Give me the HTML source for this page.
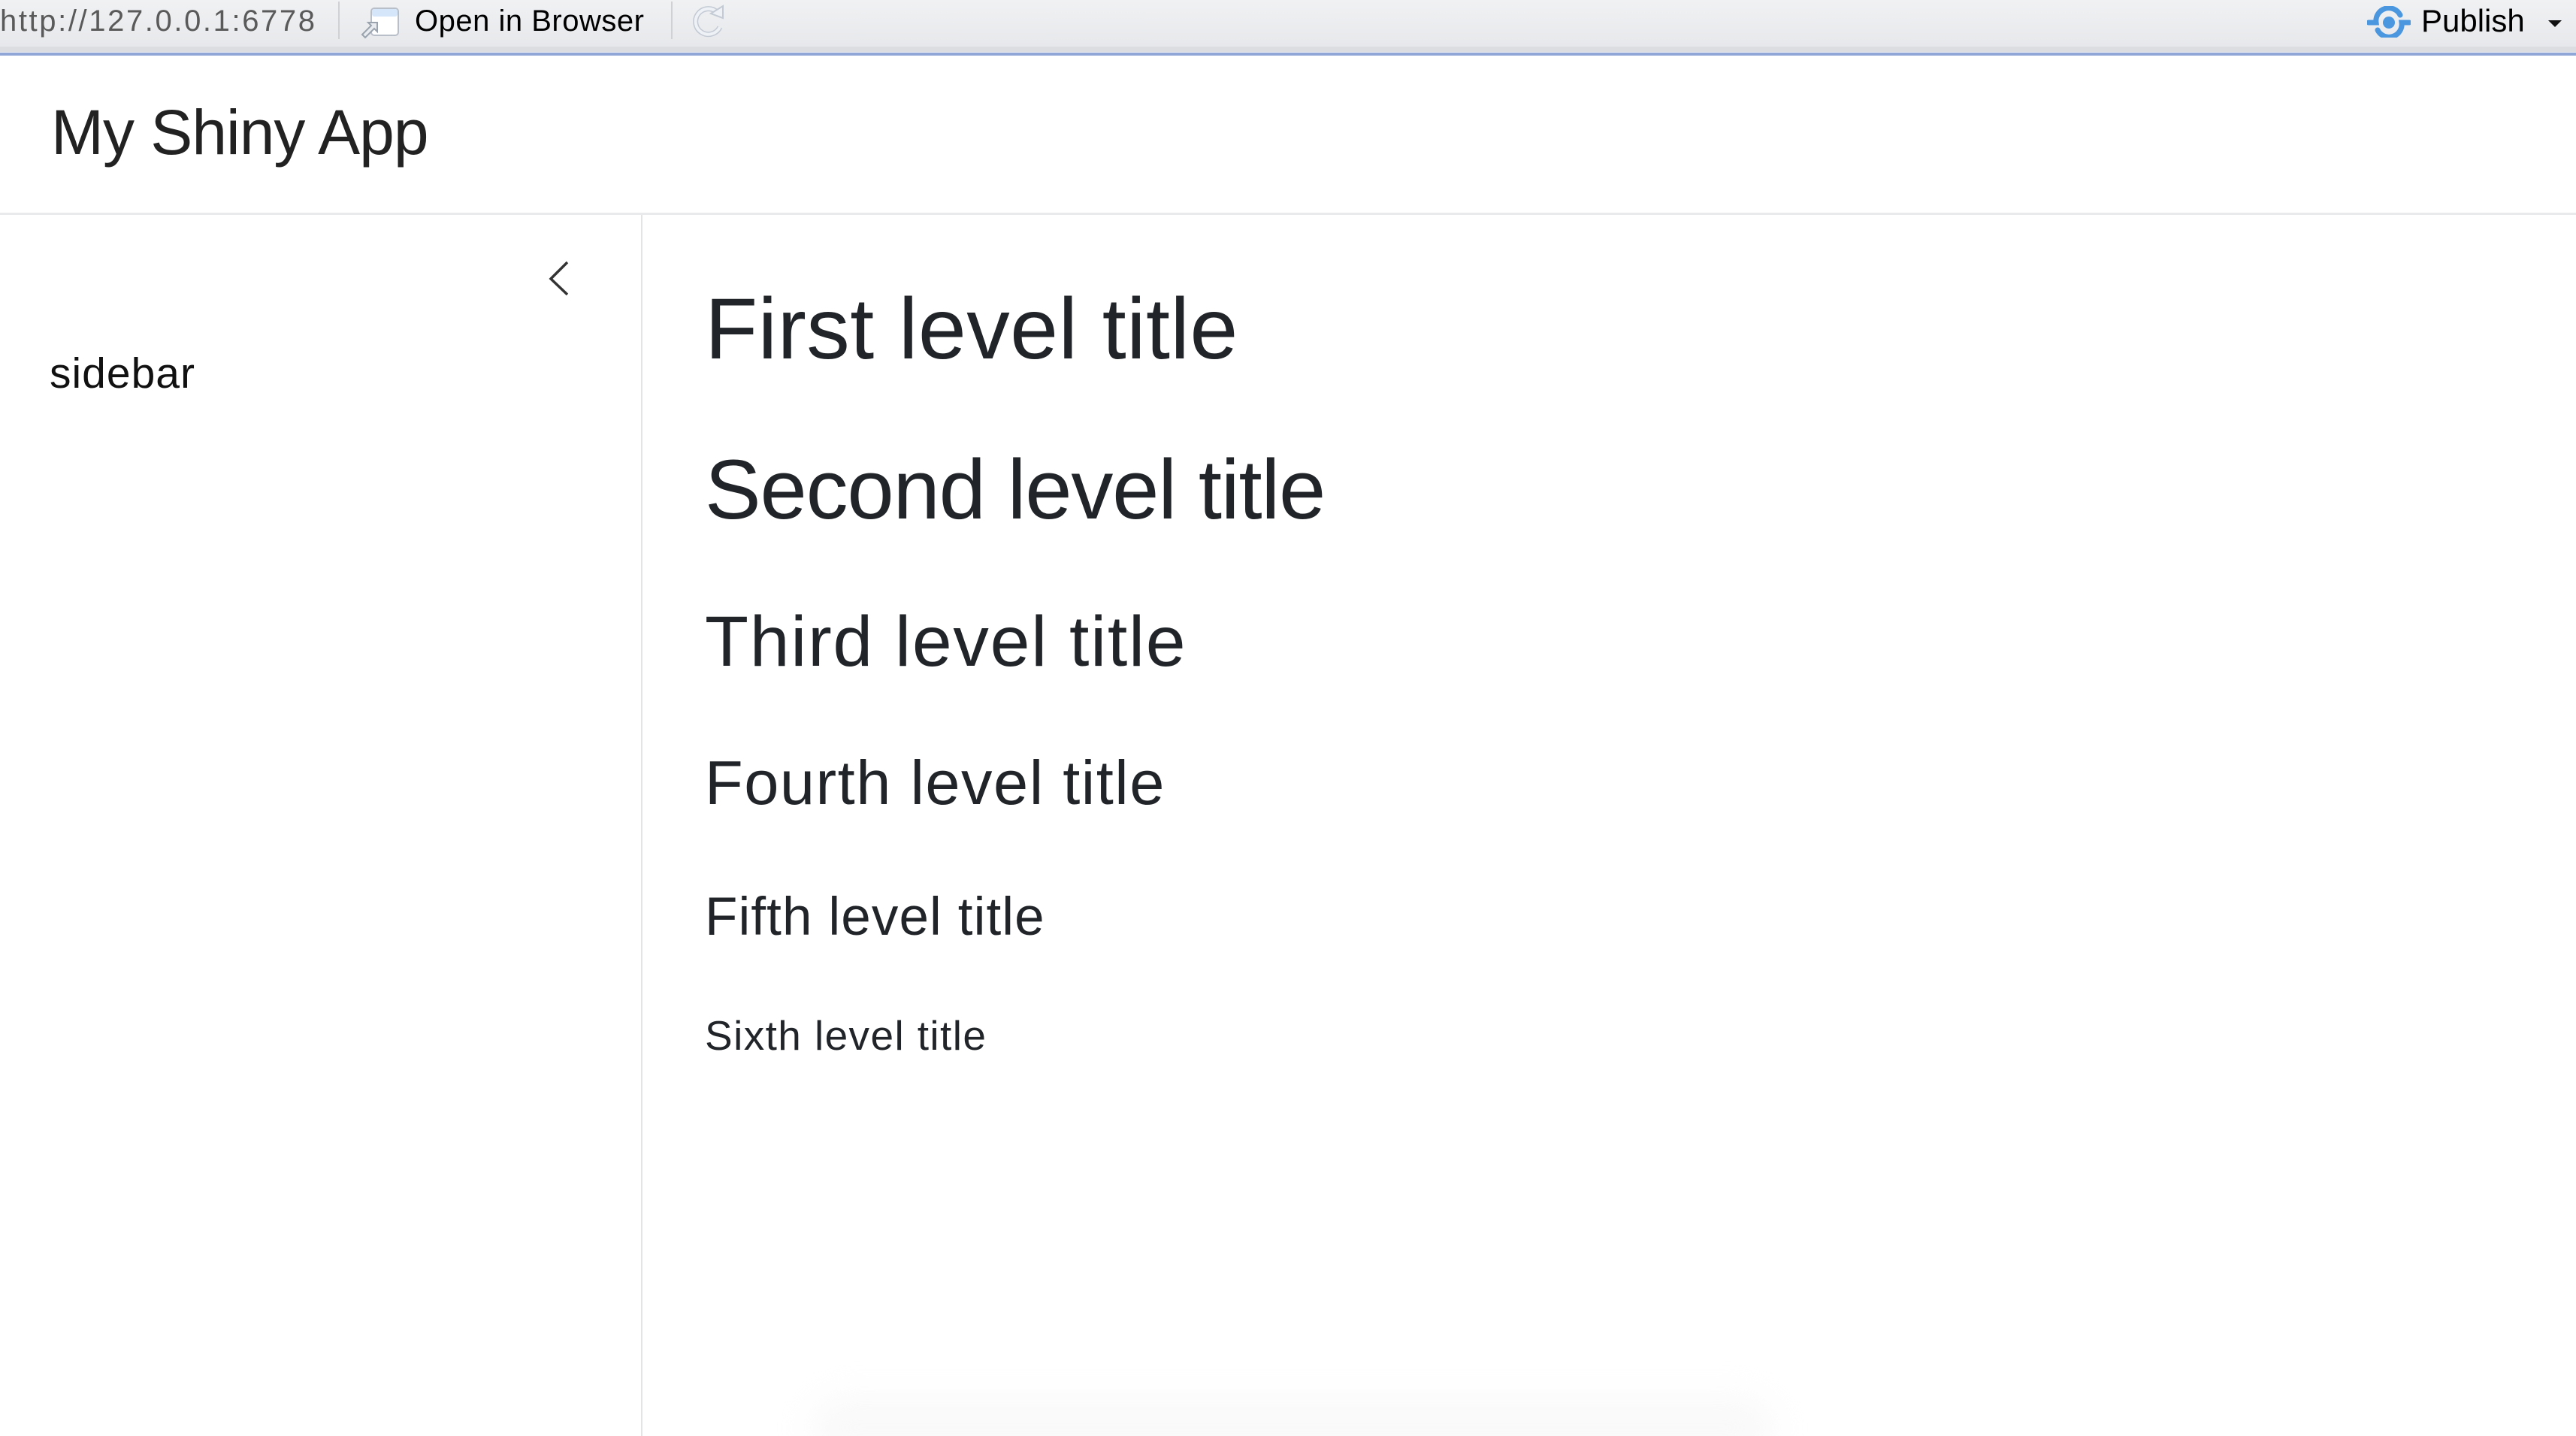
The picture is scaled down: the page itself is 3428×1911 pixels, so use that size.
<!DOCTYPE html>
<html><head><meta charset="utf-8"><style>
html,body{margin:0;padding:0;width:3428px;height:1911px;overflow:hidden;background:#fff;font-family:"Liberation Sans",sans-serif;color:#212529;position:relative}
.abs{position:absolute;white-space:nowrap}
#tb{position:absolute;left:0;top:0;width:3428px;height:62px;background:linear-gradient(#f0f1f3,#e7e8eb)}
#g1{position:absolute;left:0;top:62px;width:3428px;height:7px;background:#dcdde0}
#g2{position:absolute;left:0;top:69px;width:3428px;height:1px;background:#f4f4f6}
#bl{position:absolute;left:0;top:70px;width:3428px;height:4px;background:#8fa6d6}
.sep{position:absolute;top:2px;width:2px;height:50px;background:#d0d1d4}
#hdr{position:absolute;left:0;top:283px;width:3428px;height:3px;background:#e9eaec}
#sb{position:absolute;left:853px;top:286px;width:2px;height:1625px;background:#e3e4e6}
</style></head><body>
<div id="tb"></div><div id="g1"></div><div id="g2"></div><div id="bl"></div>
<div class="abs" style="left:0;top:6px;font-size:40px;color:#5a5a5a;line-height:44px;letter-spacing:2.6px">http://127.0.0.1:6778</div>
<div class="sep" style="left:450px"></div>
<svg class="abs" style="left:478px;top:8px" width="56" height="44" viewBox="0 0 56 44">
<rect x="16" y="3" width="36" height="36" rx="4" fill="#fff" stroke="#b9bfc8" stroke-width="2"/>
<rect x="17" y="4" width="34" height="10" rx="3" fill="#d6e6fa"/>
<path d="M4 38 L16 26 L12 22 L24 22 L24 34 L20 30 L8 42 Z" fill="#e8ebef" stroke="#9aa3ad" stroke-width="2"/>
</svg>
<div class="abs" style="left:552px;top:6px;font-size:40px;color:#000;line-height:44px;letter-spacing:0.5px">Open in Browser</div>
<div class="sep" style="left:893px"></div>
<svg class="abs" style="left:916px;top:4px" width="52" height="50" viewBox="0 0 52 50">
<path d="M38 12 A17 17 0 1 0 42 32" fill="none" stroke="#c3cad4" stroke-width="7"/>
<path d="M38 12 A17 17 0 1 0 42 32" fill="none" stroke="#eef1f5" stroke-width="4"/>
<path d="M30 14 L46 4 L46 20 Z" fill="#eef1f5" stroke="#c3cad4" stroke-width="2"/>
</svg>
<svg class="abs" style="left:3150px;top:8px" width="58" height="42" viewBox="0 0 58 42">
<path d="M2 22 H12 A17 17 0 0 1 44 12" fill="none" stroke="#4a97e0" stroke-width="7" stroke-linecap="round"/>
<path d="M56 22 H46 A17 17 0 0 1 14 32" fill="none" stroke="#4a97e0" stroke-width="7" stroke-linecap="round"/>
<circle cx="29" cy="22" r="8" fill="#4a97e0"/>
</svg>
<div class="abs" style="left:3222px;top:6px;font-size:42px;color:#000;line-height:44px">Publish</div>
<svg class="abs" style="left:3391px;top:27px" width="18" height="10"><path d="M0 0 H18 L9 9 Z" fill="#111"/></svg>

<div class="abs" style="left:68px;top:126px;font-size:84px;line-height:100px;color:#222;letter-spacing:-1px">My Shiny App</div>
<div id="hdr"></div>
<div id="sb"></div>
<svg class="abs" style="left:725px;top:342px" width="40" height="60"><path d="M30 7 L8 29 L30 50" fill="none" stroke="#333" stroke-width="3.5"/></svg>
<div class="abs" style="left:66px;top:462px;font-size:57px;line-height:70px;color:#111;letter-spacing:1px">sidebar</div>

<div class="abs" style="left:938px;top:373px;font-size:115px;line-height:130px;letter-spacing:0.4px">First level title</div>
<div class="abs" style="left:938px;top:587px;font-size:112px;line-height:130px;letter-spacing:-1.2px">Second level title</div>
<div class="abs" style="left:938px;top:799px;font-size:95px;line-height:110px;letter-spacing:1.7px">Third level title</div>
<div class="abs" style="left:938px;top:994px;font-size:83px;line-height:96px;letter-spacing:1.5px">Fourth level title</div>
<div class="abs" style="left:938px;top:1180px;font-size:71px;line-height:82px;letter-spacing:1.1px">Fifth level title</div>
<div class="abs" style="left:938px;top:1345px;font-size:55px;line-height:66px;letter-spacing:1.4px">Sixth level title</div>

<div class="abs" style="left:1080px;top:1860px;width:1280px;height:80px;border-radius:40px;background:#f5f5f5;filter:blur(22px);opacity:.6"></div>
</body></html>
